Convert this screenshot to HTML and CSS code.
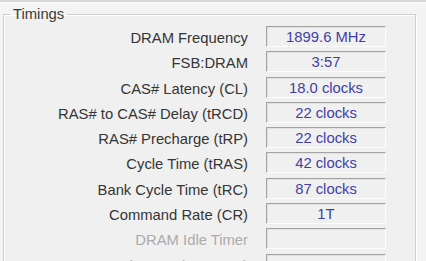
FILE: index.html
```html
<!DOCTYPE html>
<html lang="en">
<head>
    <meta charset="UTF-8">
    <meta name="viewport" content="width=device-width, initial-scale=1.0">
    <title>Timings</title>
    <link rel="stylesheet" href="styles.css">
</head>
<body>
    <div class="top-edge"></div>

    <fieldset class="group">
        <legend>Timings</legend>

        <div class="rows">
            <span class="label">DRAM Frequency</span>
            <span class="value">1899.6 MHz</span>

            <span class="label">FSB:DRAM</span>
            <span class="value">3:57</span>

            <span class="label">CAS# Latency (CL)</span>
            <span class="value">18.0 clocks</span>

            <span class="label">RAS# to CAS# Delay (tRCD)</span>
            <span class="value">22 clocks</span>

            <span class="label">RAS# Precharge (tRP)</span>
            <span class="value">22 clocks</span>

            <span class="label">Cycle Time (tRAS)</span>
            <span class="value">42 clocks</span>

            <span class="label">Bank Cycle Time (tRC)</span>
            <span class="value">87 clocks</span>

            <span class="label">Command Rate (CR)</span>
            <span class="value">1T</span>

            <span class="label disabled">DRAM Idle Timer</span>
            <span class="value"></span>

            <span class="label disabled">Total CAS# (tRDRAM)</span>
            <span class="value"></span>
        </div>
    </fieldset>
</body>
</html>
```

FILE: styles.css
```css
body {
    margin: 0;
    height: 261px;
    overflow: hidden;
    background-color: #f4f4f4;
    font-family: "Liberation Sans", Arial, sans-serif;
    font-size: 14.8px;
    color: #353535;
}
.top-edge {
    height: 2px;
    background-color: #d8d8d8;
    border-bottom: 1px solid #fbfbfb;
}
.group {
    margin: 2px 10px 0 3px;
    padding: 0 0 20px 0;
    border: 1px solid #cfcfcf;
    box-shadow: inset 1px 1px #ffffff, 1px 1px #ffffff;
    background-color: #f0f0f0;
}
.group legend {
    margin-left: 6px;
    padding: 0 3px;
    line-height: 18px;
    color: #3a3a3a;
}
.rows {
    display: grid;
    grid-template-columns: 244px 120px;
    grid-auto-rows: 21px;
    column-gap: 18px;
    row-gap: 4.3px;
    padding-top: 3px;
}
.label {
    text-align: right;
    line-height: 24px;
    white-space: nowrap;
}
.label.disabled {
    color: #ababab;
}
.value {
    box-sizing: border-box;
    border-top: 1px solid #a2a2a2;
    border-left: 1px solid #a2a2a2;
    border-right: 1px solid #fdfdfd;
    border-bottom: 1px solid #fdfdfd;
    box-shadow: inset 1px 1px #e2e2e2;
    text-align: center;
    line-height: 20px;
    color: #3f3fa6;
}
```
